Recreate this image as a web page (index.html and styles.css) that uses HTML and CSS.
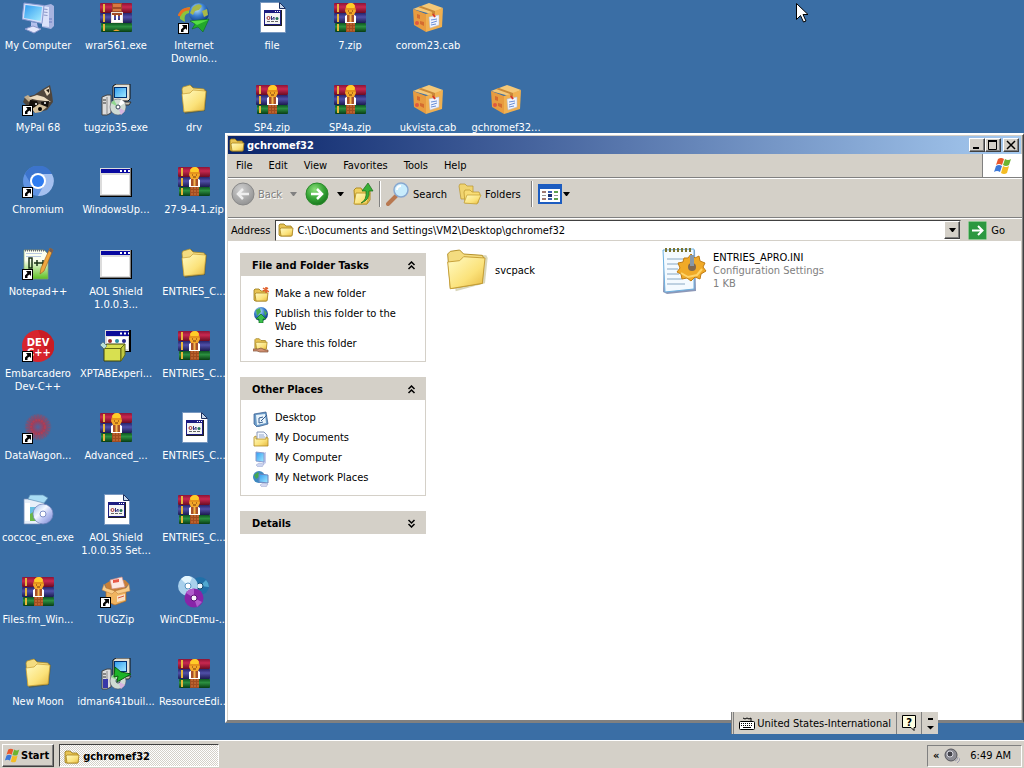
FILE: index.html
```html
<!doctype html>
<html lang="en">
    <head>
        <meta charset="UTF-8" />
        <meta name="viewport" content="width=device-width, initial-scale=1.0" />
        <title>gchromef32</title>
        <link rel="stylesheet" href="styles.css">
    </head>
    <body>
        <!-- Icon sprite -->
        <svg class="sprite" aria-hidden="true">
            <defs>
                <linearGradient id="g-folder" x1="0" y1="0" x2="1" y2="1">
                    <stop offset="0" stop-color="#fffbc4" />
                    <stop offset="0.6" stop-color="#fbe27a" />
                    <stop offset="1" stop-color="#e6b840" />
                </linearGradient>
                <linearGradient id="g-screen" x1="0" y1="0" x2="1" y2="1">
                    <stop offset="0" stop-color="#2f9af0" />
                    <stop offset="1" stop-color="#a4ecff" />
                </linearGradient>
                <linearGradient id="g-red" x1="0" y1="0" x2="0" y2="1">
                    <stop offset="0" stop-color="#8c1436" />
                    <stop offset="0.4" stop-color="#c82850" />
                    <stop offset="1" stop-color="#6c0c22" />
                </linearGradient>
                <linearGradient id="g-blue" x1="0" y1="0" x2="0" y2="1">
                    <stop offset="0" stop-color="#26246c" />
                    <stop offset="0.4" stop-color="#5050a8" />
                    <stop offset="1" stop-color="#1c1a50" />
                </linearGradient>
                <linearGradient id="g-green" x1="0" y1="0" x2="0" y2="1">
                    <stop offset="0" stop-color="#0c5420" />
                    <stop offset="0.4" stop-color="#2c9040" />
                    <stop offset="1" stop-color="#083c14" />
                </linearGradient>
                <radialGradient id="g-globe" cx="0.4" cy="0.3" r="0.7">
                    <stop offset="0" stop-color="#bfe6ff" />
                    <stop offset="0.5" stop-color="#3c80d0" />
                    <stop offset="1" stop-color="#0c3880" />
                </radialGradient>
                <radialGradient id="g-go" cx="0.4" cy="0.3" r="0.7">
                    <stop offset="0" stop-color="#8ee07c" />
                    <stop offset="0.6" stop-color="#35a435" />
                    <stop offset="1" stop-color="#1b7a20" />
                </radialGradient>
                <radialGradient id="g-back" cx="0.4" cy="0.3" r="0.7">
                    <stop offset="0" stop-color="#cfcfcf" />
                    <stop offset="1" stop-color="#949494" />
                </radialGradient>
                <radialGradient id="g-wagon">
                    <stop offset="0" stop-color="#4a66a0" />
                    <stop offset="0.4" stop-color="#9a4060" />
                    <stop offset="1" stop-color="#c03040" stop-opacity="0" />
                </radialGradient>
                <linearGradient id="g-disc" x1="0" y1="0" x2="1" y2="1">
                    <stop offset="0" stop-color="#9ab8f0" />
                    <stop offset="0.4" stop-color="#f4f8ff" />
                    <stop offset="0.6" stop-color="#c0c8f4" />
                    <stop offset="1" stop-color="#7484d0" />
                </linearGradient>
                <linearGradient id="g-npp" x1="0" y1="0" x2="0" y2="1">
                    <stop offset="0.35" stop-color="#fbfff0" />
                    <stop offset="1" stop-color="#5cc020" />
                </linearGradient>
            </defs>

            <symbol id="shortcut" viewBox="0 0 11 11">
                <rect x="0.5" y="0.5" width="10" height="10" fill="#fff" stroke="#000" />
                <path d="M4 2h5v5L7.500 5.500 5.500 7v2H3V6.500L5.500 4z" fill="#000" />
            </symbol>

            <symbol id="computer" viewBox="0 0 32 32">
                <path d="M20 4l9-2 3 2v20l-3 3-9-2z" fill="#a8b4e0" />
                <path d="M20 4l7 1v20l-7-1z" fill="#dce2fa" />
                <path d="M21.500 7l4 .5M21.500 10l4 .5M21.500 13l4 .5" stroke="#8c98c8" />
                <path d="M27 17h3M27 20h3" stroke="#6c7cc0" />
                <path d="M2 1l20 2.500-2 18L0 17z" fill="#d4e0fa" stroke="#8898d0" />
                <path d="M3.500 3l16.500 2-1.500 14L2 16z" fill="url(#g-screen)" />
                <path d="M9 20l6 1 1 5h-7z" fill="#b4c0ec" />
                <path d="M3 27l8-3 8 3-7 4z" fill="#e4e8fc" stroke="#8c98cc" />
            </symbol>

            <!-- Three stacked books, shared by both archive icons -->
            <symbol id="books" viewBox="0 0 32 32">
                <rect x="0" y="1" width="32" height="10" rx="1" fill="url(#g-red)" />
                <rect x="0" y="11" width="32" height="10" rx="1" fill="url(#g-blue)" />
                <rect x="1" y="21" width="31" height="9" rx="1" fill="url(#g-green)" />
                <path d="M4 2v8M4 12v8M4 22v7" stroke="#e8b83c" stroke-width="2" />
            </symbol>

            <symbol id="rar" viewBox="0 0 32 32">
                <use href="#books" width="32" height="32" />
                <path d="M12 20h9v10h-9z" fill="#a04c20" />
                <path d="M14 21v9M17 21v9M20 21v9" stroke="#d4783c" stroke-dasharray="2 1" />
                <path d="M11 14l3-2h5l3 2v7H11z" fill="#fff" />
                <path d="M13 13h7v7h-7z" fill="#a85028" />
                <path d="M16.500 12v8" stroke="#f4b850" stroke-width="2" />
                <path d="M12 5q1-4 4.500-4T21 5l1 4-2 4h-7l-2-4z" fill="#f4a828" />
                <path d="M12 4q2-3 5-3t4 3l-1 2h-7z" fill="#ffcc28" />
                <path d="M11 7h11" stroke="#d88010" />
                <path d="M14 9h1M18 9h1M15 11h3" stroke="#70340c" />
            </symbol>

            <symbol id="rar-exe" viewBox="0 0 32 32">
                <use href="#books" width="32" height="32" />
                <path d="M12 1h10v13H12z" fill="#a04c28" />
                <path d="M13 2h8v3h-8zM13 7h8v2h-8z" fill="#d87840" />
                <path d="M11 13h3v5h2v-5h2v5h2v-5h3v8H11z" fill="#fff" />
                <rect x="11.500" y="10.500" width="11" height="10" fill="none" stroke="#ece4d8" />
                <path d="M13 29q3-3 7 0z" fill="#f0a030" />
            </symbol>

            <symbol id="idm" viewBox="0 0 32 32">
                <path d="M2 17Q1 6 12 5l-1 6q-6 1-4 9z" fill="#8ac43c" />
                <path d="M1 14Q4 6 12 7" fill="none" stroke="#e87020" stroke-width="3" />
                <circle cx="21" cy="11" r="10" fill="url(#g-globe)" />
                <path d="M15 5q6-5 9-1l-3 4-4 1-2 4-3-2zM24 9l5-2 1 6-4 2z" fill="#a8b848" />
                <path d="M12 19l19-2-6 13-5-5-6 2 3-5z" fill="#22a82c" stroke="#0c6414" stroke-width="0.5" />
                <path d="M13 19l17-1-11 5z" fill="#54dc44" />
            </symbol>

            <symbol id="page" viewBox="0 0 32 32">
                <path d="M4.500.5h19l6 6v24h-25z" fill="#fff" stroke="#7898c0" />
                <path d="M23.500.5v6h6z" fill="#c8d8ec" stroke="#1c3060" />
                <rect x="8" y="8" width="18" height="16" fill="#222" />
                <rect x="8" y="8" width="17" height="15" fill="#1c1c80" />
                <rect x="9" y="11" width="15" height="11" fill="#f4f4f4" />
                <path d="M19 9.500h1M21 9.500h1M23 9.500h1" stroke="#fff" />
                <circle cx="12.500" cy="16" r="1.500" fill="none" stroke="#a02c2c" />
                <path d="M15.500 14v4l2.500-3v3" stroke="#303080" fill="none" />
                <circle cx="21" cy="16.500" r="1.500" fill="#207050" />
                <path d="M11 19.500h11" stroke="#666" stroke-dasharray="3 1" />
            </symbol>

            <symbol id="cab" viewBox="0 0 32 32">
                <path d="M1 7L17 1l14 5-12 6z" fill="#f4c878" />
                <path d="M1 7l13 5v18L2 23z" fill="#e89c40" />
                <path d="M14 12l17-6-1 19-16 5z" fill="#f0b050" />
                <path d="M9 4l14 5v3l-3 1V10L6 5z" fill="#c88838" />
                <path d="M17 15l10-2v10l-9 3z" fill="#f0f4fc" stroke="#b0bcd8" stroke-width="0.5" />
                <path d="M19 18l6-1M19 21l6-2M19 23l5-1" stroke="#6c90d8" />
                <path d="M21 12l2 3" stroke="#d83828" stroke-width="2" />
                <path d="M5 12l3 1v4l-3-1zM8 19l4 1v4l-4-2z" fill="#d46c30" />
                <circle cx="5" cy="21" r="2" fill="#e05840" />
            </symbol>

            <symbol id="raccoon" viewBox="0 0 32 32">
                <path d="M21 5l7-4 2 9 1 8-6 8-12 3-7-6-5-5 2-5 9-2z" fill="#50463c" />
                <path d="M22 6l5-3 1 6-3 3z" fill="#e8d8bc" />
                <path d="M24 6l3-1v4z" fill="#241c14" />
                <path d="M2 13l4-2 4 4-3 3z" fill="#c0ac8c" />
                <path d="M6 14l9-3 7 2 7 5-6-1-8-1z" fill="#ecdcc0" />
                <path d="M8 16l7 1 2 4-5 3-5-3zM19 18l8-1-1 6-6 1z" fill="#14100c" />
                <path d="M17 20l3 1 5 2-6 5-6 1-3-4z" fill="#d4c09c" />
                <circle cx="14" cy="20" r="1" fill="#fff" />
                <circle cx="23" cy="19" r="1" fill="#fff" />
                <circle cx="18" cy="25" r="2" fill="#000" />
            </symbol>

            <symbol id="setup" viewBox="0 0 32 32">
                <path d="M2 13l5-2h4v18l-4 2H2z" fill="#dcdcdc" stroke="#444" />
                <path d="M7 13v17" stroke="#888" />
                <path d="M3 16h3M3 19h3" stroke="#333" />
                <path d="M13 2l3-2h14v15l-2 2H13z" fill="#e4e0d4" stroke="#111" />
                <rect x="14.500" y="3.500" width="12" height="10" fill="url(#g-screen)" stroke="#003070" />
                <path d="M14 18h17l-2 3H14z" fill="#c8c4b8" stroke="#333" />
                <circle cx="18" cy="23" r="8" fill="#d0dcd4" stroke="#556" stroke-width="0.5" />
                <path d="M18 23l-7-4 3-3z" fill="#90d890" />
                <path d="M18 23l7 4-4 4z" fill="#d8b4e0" />
                <path d="M18 23l3-8 4 4z" fill="#fff" />
                <circle cx="18" cy="23" r="2" fill="#fff" stroke="#345" />
            </symbol>

            <symbol id="folder" viewBox="0 0 32 32">
                <path d="M5 6l1-3 7-2 3 3 10 1 3 2-2 20L7 30z" fill="#5c5420" fill-opacity="0.5" />
                <path d="M4 5l1-2 7-2 3 3 11 1 1 2-1 19L6 28z" fill="#f4dc80" stroke="#b08c24" stroke-width="0.700" />
                <path d="M4 10l8-1 3-3 13 1-2 19L6 28z" fill="url(#g-folder)" stroke="#c49c34" stroke-width="0.700" />
            </symbol>

            <symbol id="folder-open" viewBox="0 0 16 16">
                <path d="M1 3l1-1h4l2 2h5l1 2v7l-1 1H2l-1-1z" fill="#e8c454" stroke="#987814" stroke-width="0.800" />
                <path d="M2 7l1-1h12l-1 8H3z" fill="url(#g-folder)" stroke="#a88420" stroke-width="0.800" />
            </symbol>

            <symbol id="chromium" viewBox="0 0 32 32">
                <circle cx="16" cy="15" r="15" fill="#6094e4" />
                <path d="M16 8H30A15 15 0 0 0 3 8l6 10A7 7 0 0 1 16 8z" fill="#3c74cc" />
                <path d="M16 8h14a15 15 0 0 1-14 22l6-11A7 7 0 0 0 16 8z" fill="#a4c0f0" />
                <circle cx="16" cy="15" r="8" fill="#fff" />
                <circle cx="16" cy="15" r="6" fill="#2f7cf0" />
            </symbol>

            <symbol id="app" viewBox="0 0 32 32">
                <rect x="0" y="2" width="32" height="29" fill="#000" />
                <rect x="0" y="2" width="31" height="28" fill="#808080" />
                <rect x="0" y="2" width="30" height="27" fill="#dcdcdc" />
                <rect x="1" y="3" width="29" height="4" fill="#0808a0" />
                <path d="M20 5h2M24 5h2M28 5h2" stroke="#fff" stroke-width="2" />
                <rect x="2" y="9" width="27" height="19" fill="#fff" />
            </symbol>

            <symbol id="npp" viewBox="0 0 32 32">
                <path d="M2 2h20l4 4v25H2z" fill="url(#g-npp)" stroke="#88a070" stroke-width="0.700" />
                <path d="M3 2.500h19" stroke="#667" stroke-width="2" stroke-dasharray="1 1" />
                <path d="M4 5.500h16M4 8.500h15" stroke="#b8c8e0" />
                <path d="M7 10h3v10H7zM12 15h6M15 12v6M18 15h6M21 12v6" fill="none" stroke="#183018" stroke-width="1.500" />
                <path d="M28 0l3 2-9 21-4 3 1-6z" fill="#f0a840" stroke="#a05c18" stroke-width="0.600" />
                <path d="M28 0l3 2-1 3-3-2z" fill="#785c50" />
            </symbol>

            <symbol id="package" viewBox="0 0 32 32">
                <rect x="6" y="0" width="25" height="22" fill="#000" />
                <rect x="5" y="0" width="24" height="21" fill="#dcdcdc" />
                <rect x="6" y="1" width="23" height="5" fill="#0c0c98" />
                <path d="M20 3.500h2M24 3.500h2M28 3.500h1" stroke="#fff" stroke-width="2" />
                <rect x="7" y="7" width="21" height="12" fill="#fff" />
                <circle cx="10" cy="11" r="2" fill="#a03030" />
                <circle cx="17" cy="11" r="2" fill="#2c8ca0" />
                <circle cx="24" cy="11" r="2" fill="#28288c" />
                <path d="M2 17l5-3h18l-4 5v12H4V19z" fill="#d8e050" stroke="#3c4008" />
                <path d="M21 18l4-4v11l-4 6zM4 18.500h17" stroke="#606814" fill="#c0c840" />
                <path d="M0 15l3-3 4 4-3 3z" fill="#b8e0d8" stroke="#456" stroke-width="0.500" />
            </symbol>

            <symbol id="wagon" viewBox="0 0 32 32">
                <circle cx="16" cy="15" r="14" fill="url(#g-wagon)" />
                <circle cx="16" cy="15" r="11" fill="none" stroke="#c83c48" stroke-width="3" stroke-dasharray="1 2" stroke-opacity="0.350" />
                <circle cx="16" cy="15" r="7" fill="none" stroke="#d03844" stroke-width="2" stroke-dasharray="2 1" stroke-opacity="0.500" />
            </symbol>

            <symbol id="disc-box" viewBox="0 0 32 32">
                <path d="M2 5h17l3 2v20l-4 3H2z" fill="#e8f0fa" stroke="#7890b8" stroke-width="0.700" />
                <path d="M6 5l2-4h13l5 3-4 5z" fill="#a8dcf4" stroke="#6090b8" stroke-width="0.700" />
                <path d="M3 9h5v18H3z" fill="#fff" />
                <path d="M8 13h9v14H8z" fill="#68c0e0" />
                <path d="M8 20l5-3 3 4v6H8z" fill="#6cb848" />
                <circle cx="21" cy="20" r="10" fill="url(#g-disc)" stroke="#7080b8" stroke-width="0.700" />
                <circle cx="21" cy="20" r="3" fill="#fff" stroke="#8090c8" />
            </symbol>

            <symbol id="tugzip" viewBox="0 0 32 32">
                <path d="M5 8l5-3 15-1 4 4-4 4v13l-11 4-8-4V12z" fill="#c88038" />
                <path d="M10 4l12-3 3 10-13 2z" fill="#fce8e4" stroke="#d08c80" stroke-width="0.700" />
                <path d="M13 4l6-1v3l-6 1z" fill="#e85848" />
                <path d="M6 12l9 3 11-3v13l-11 4-9-4z" fill="#f0b460" stroke="#a8682c" stroke-width="0.700" />
                <path d="M4 8l2 4 9 3-3 3-10-4zM26 12l3-4 1 7-12 3-3-3z" fill="#f8cc88" stroke="#b8783c" stroke-width="0.500" />
                <path d="M17 20l8-2v6l-8 2z" fill="#f8e0c4" />
                <path d="M18 22l6-2" stroke="#d85840" />
            </symbol>

            <symbol id="discs" viewBox="0 0 32 32">
                <circle cx="22" cy="10" r="9" fill="#2070a8" />
                <path d="M22 10l6-6q3 3 3 7z" fill="#50a8d0" />
                <circle cx="22" cy="10" r="3" fill="#e8f4fc" stroke="#104870" />
                <circle cx="10" cy="10" r="10" fill="#a8d0ec" />
                <path d="M10 10L3 3q6-6 11-1zM10 10l8 5q-3 5-9 5z" fill="#e4f6ff" />
                <circle cx="10" cy="10" r="3" fill="#fff" stroke="#5894c0" />
                <circle cx="16" cy="22" r="9.500" fill="#8824a8" />
                <path d="M16 22l-8-5q3-5 8-4zM16 22l8 4-5 5z" fill="#b05ccc" />
                <circle cx="16" cy="22" r="3" fill="#f8f0fc" stroke="#5c1078" />
            </symbol>

            <symbol id="winflag" viewBox="0 0 20 20">
                <path d="M5 3q3-2 6 0L9 9Q6 7 3 9z" fill="#e8582c" />
                <path d="M12 3q3 2 6 0l-2 6q-3 2-6 0z" fill="#6cb430" />
                <path d="M3 10q3-2 6 0l-2 6q-3-2-6 0z" fill="#3c78d8" />
                <path d="M10 10q3 2 6 0l-2 7q-3 2-6 0z" fill="#f4bc24" />
            </symbol>

            <symbol id="circle-arrow" viewBox="0 0 24 24">
                <path d="M6 12h11M12 7l5 5-5 5" fill="none" stroke="#fff" stroke-width="2.500" />
            </symbol>

            <symbol id="chevrons" viewBox="0 0 9 9">
                <path d="M1.500 4l3-3 3 3M1.500 8l3-3 3 3" fill="none" stroke="#000" stroke-width="1.500" />
            </symbol>
        </svg>

        <main class="desktop">
            <ul class="column">
                <li class="shortcut"><svg class="icon"><use href="#computer" /></svg><span>My Computer</span></li>
                <li class="shortcut"><svg class="icon" viewBox="0 0 32 32"><use href="#raccoon" width="32" height="32" /><use href="#shortcut" y="21" width="11" height="11" /></svg><span>MyPal 68</span></li>
                <li class="shortcut"><svg class="icon" viewBox="0 0 32 32"><use href="#chromium" width="32" height="32" /><use href="#shortcut" y="21" width="11" height="11" /></svg><span>Chromium</span></li>
                <li class="shortcut"><svg class="icon" viewBox="0 0 32 32"><use href="#npp" width="32" height="32" /><use href="#shortcut" y="21" width="11" height="11" /></svg><span>Notepad++</span></li>
                <li class="shortcut">
                    <svg class="icon" viewBox="0 0 32 32">
                        <circle cx="16" cy="16" r="16" fill="#d8242c" />
                        <path d="M16 0a16 16 0 0 1 11 28z" fill="#c81c24" />
                        <text x="16" y="16" class="devcpp-text">DEV</text>
                        <text x="17" y="26" class="devcpp-text">C++</text>
                        <use href="#shortcut" y="21" width="11" height="11" />
                    </svg>
                    <span>Embarcadero<br>Dev-C++</span>
                </li>
                <li class="shortcut"><svg class="icon" viewBox="0 0 32 32"><use href="#wagon" width="32" height="32" /><use href="#shortcut" y="21" width="11" height="11" /></svg><span>DataWagon...</span></li>
                <li class="shortcut"><svg class="icon"><use href="#disc-box" /></svg><span>coccoc_en.exe</span></li>
                <li class="shortcut"><svg class="icon"><use href="#rar" /></svg><span>Files.fm_Win...</span></li>
                <li class="shortcut"><svg class="icon"><use href="#folder" /></svg><span>New Moon</span></li>
            </ul>
            <ul class="column">
                <li class="shortcut"><svg class="icon"><use href="#rar-exe" /></svg><span>wrar561.exe</span></li>
                <li class="shortcut"><svg class="icon"><use href="#setup" /></svg><span>tugzip35.exe</span></li>
                <li class="shortcut"><svg class="icon"><use href="#app" /></svg><span>WindowsUp...</span></li>
                <li class="shortcut"><svg class="icon"><use href="#app" /></svg><span>AOL Shield<br>1.0.0.3...</span></li>
                <li class="shortcut"><svg class="icon"><use href="#package" /></svg><span>XPTABExperi...</span></li>
                <li class="shortcut"><svg class="icon"><use href="#rar" /></svg><span>Advanced_...</span></li>
                <li class="shortcut"><svg class="icon"><use href="#page" /></svg><span>AOL Shield<br>1.0.0.35 Set...</span></li>
                <li class="shortcut"><svg class="icon" viewBox="0 0 32 32"><use href="#tugzip" width="32" height="32" /><use href="#shortcut" y="21" width="11" height="11" /></svg><span>TUGZip</span></li>
                <li class="shortcut"><svg class="icon" viewBox="0 0 32 32"><use href="#setup" width="32" height="32" /><path d="M15 9l6 5 10 2-14 8 1-6-4 1z" fill="#1cb428" stroke="#0a5c10" /><path d="M3 21h5v9H3z" fill="#3838a8" /></svg><span>idman641buil...</span></li>
            </ul>
            <ul class="column">
                <li class="shortcut"><svg class="icon" viewBox="0 0 32 32"><use href="#idm" width="32" height="32" /><use href="#shortcut" y="21" width="11" height="11" /></svg><span>Internet<br>Downlo...</span></li>
                <li class="shortcut"><svg class="icon"><use href="#folder" /></svg><span>drv</span></li>
                <li class="shortcut"><svg class="icon"><use href="#rar" /></svg><span>27-9-4-1.zip</span></li>
                <li class="shortcut"><svg class="icon"><use href="#folder" /></svg><span>ENTRIES_C...</span></li>
                <li class="shortcut"><svg class="icon"><use href="#rar" /></svg><span>ENTRIES_C...</span></li>
                <li class="shortcut"><svg class="icon"><use href="#page" /></svg><span>ENTRIES_C...</span></li>
                <li class="shortcut"><svg class="icon"><use href="#rar" /></svg><span>ENTRIES_C...</span></li>
                <li class="shortcut"><svg class="icon"><use href="#discs" /></svg><span>WinCDEmu-...</span></li>
                <li class="shortcut"><svg class="icon"><use href="#rar" /></svg><span>ResourceEdi...</span></li>
            </ul>
            <ul class="column">
                <li class="shortcut"><svg class="icon"><use href="#page" /></svg><span>file</span></li>
                <li class="shortcut"><svg class="icon"><use href="#rar" /></svg><span>SP4.zip</span></li>
            </ul>
            <ul class="column">
                <li class="shortcut"><svg class="icon"><use href="#rar" /></svg><span>7.zip</span></li>
                <li class="shortcut"><svg class="icon"><use href="#rar" /></svg><span>SP4a.zip</span></li>
            </ul>
            <ul class="column">
                <li class="shortcut"><svg class="icon"><use href="#cab" /></svg><span>corom23.cab</span></li>
                <li class="shortcut"><svg class="icon"><use href="#cab" /></svg><span>ukvista.cab</span></li>
            </ul>
            <ul class="column column-second-row">
                <li class="shortcut"><svg class="icon"><use href="#cab" /></svg><span>gchromef32...</span></li>
            </ul>
        </main>

        <!-- Explorer window -->
        <section class="window">
            <header class="titlebar">
                <svg class="icon-small"><use href="#folder-open" /></svg>
                <h1>gchromef32</h1>
                <div class="window-buttons">
                    <button class="raised" aria-label="Minimize"><svg width="12" height="10"><path d="M2 8h6" stroke="#000" stroke-width="2" /></svg></button>
                    <button class="raised" aria-label="Maximize"><svg width="12" height="10"><path d="M1.500 1v8.500h8V1M1 1h9" fill="none" stroke="#000" /><path d="M1 1h9" stroke="#000" stroke-width="2" /></svg></button>
                    <button class="raised close" aria-label="Close"><svg width="12" height="10"><path d="M2 1l8 8M10 1L2 9" stroke="#000" stroke-width="1.500" /></svg></button>
                </div>
            </header>

            <nav class="menubar">
                <button>File</button>
                <button>Edit</button>
                <button>View</button>
                <button>Favorites</button>
                <button>Tools</button>
                <button>Help</button>
                <div class="brand"><svg width="22" height="20"><use href="#winflag" /></svg></div>
            </nav>

            <div class="toolbar">
                <button class="tool back" disabled>
                    <svg width="24" height="24" viewBox="0 0 24 24"><circle cx="12" cy="12" r="11" fill="url(#g-back)" stroke="#888" /><path d="M18 12H7M12 7l-5 5 5 5" fill="none" stroke="#eee" stroke-width="2.500" /></svg>
                    Back
                </button>
                <button class="caret caret-off" aria-label="Back history" disabled></button>
                <button class="tool" aria-label="Forward">
                    <svg width="24" height="24" viewBox="0 0 24 24"><circle cx="12" cy="12" r="11" fill="url(#g-go)" stroke="#2a8a2a" /><use href="#circle-arrow" width="24" height="24" /></svg>
                </button>
                <button class="caret" aria-label="Forward history"></button>
                <button class="tool" aria-label="Up">
                    <svg width="22" height="24" viewBox="0 0 22 24"><path d="M2 8l2-2h5l1 2h8v10l-3 4H3z" fill="#f0d060" stroke="#b08c20" /><path d="M2 22l2-11h14l-3 11z" fill="url(#g-folder)" stroke="#c09c30" /><path d="M9 21q6-3 5-12h-4l6-8 5 8h-4q1 9-8 12z" fill="#38b038" stroke="#186c18" stroke-width="0.700" /></svg>
                </button>
                <span class="separator"></span>
                <button class="tool">
                    <svg width="24" height="24" viewBox="0 0 24 24"><path d="M2 22l8-8" stroke="#b87850" stroke-width="4" stroke-linecap="round" /><circle cx="15" cy="8" r="7" fill="#c8ecfc" stroke="#88a8d0" stroke-width="1.500" /><path d="M11 8q0-4 4-4" fill="none" stroke="#fff" stroke-width="2" /></svg>
                    Search
                </button>
                <button class="tool folders">
                    <svg width="24" height="24" viewBox="0 0 24 24"><path d="M1 4l1-2h5l2 2h6v13H3z" fill="#f0d470" stroke="#b8942c" stroke-width="0.700" /><path d="M6 10l1-2h5l2 2h7l1 2-2 9H7z" fill="#f8dc74" stroke="#b8942c" stroke-width="0.700" /><path d="M6 21l3-8h14l-4 9z" fill="url(#g-folder)" stroke="#c09c30" stroke-width="0.700" /></svg>
                    Folders
                </button>
                <span class="separator"></span>
                <button class="tool views" aria-label="Views">
                    <svg width="24" height="20" viewBox="0 0 24 20"><rect x="1" y="1" width="22" height="18" fill="#fff" stroke="#1c5cc0" stroke-width="2" /><path d="M1 3h22" stroke="#1c5cc0" stroke-width="4" /><path d="M4 8h4M4 15h4" stroke="#a07870" stroke-width="2" /><path d="M10 8h4M10 15h4" stroke="#3c60b0" stroke-width="2" /><path d="M16 8h4M16 15h4" stroke="#5ca04c" stroke-width="2" /><path d="M4 11.500h4M16 11.500h4" stroke="#999" /><path d="M10 11.500h4" stroke="#1c3070" stroke-width="3" /></svg>
                    <i class="arrow"></i>
                </button>
            </div>

            <form class="addressbar">
                <label for="address">Address</label>
                <div class="address-field">
                    <svg class="icon-small"><use href="#folder-open" /></svg>
                    <input type="text" id="address" value="C:\Documents and Settings\VM2\Desktop\gchromef32" />
                    <button type="button" class="raised drop" aria-label="Show addresses"><i class="arrow"></i></button>
                </div>
                <button type="button" class="go">
                    <svg width="19" height="19" viewBox="0 0 19 19"><rect x="0.500" y="0.500" width="18" height="18" rx="1" fill="#2c9840" stroke="#8cc890" /><path d="M4 9.500h10M10 5l4.500 4.500L10 14" fill="none" stroke="#fff" stroke-width="2" /></svg>
                    Go
                </button>
            </form>

            <div class="content">
                <aside class="sidebar">
                    <section class="panel">
                        <h2>File and Folder Tasks <svg width="9" height="9"><use href="#chevrons" /></svg></h2>
                        <ul>
                            <li><svg class="icon-small" viewBox="0 0 16 16"><use href="#folder-open" width="16" height="16" /><path d="M10 4l5-3M13 0v6M10 1l6 4" stroke="#e0602c" stroke-width="1.500" /></svg><a href="#">Make a new folder</a></li>
                            <li><svg class="icon-small" viewBox="0 0 16 16"><circle cx="8" cy="7" r="7" fill="url(#g-globe)" /><path d="M3 3l4-2 1 4-4 4zM11 3l3 3-2 3z" fill="#48b050" /><path d="M8 7l5 5h-3v4H6v-4H3z" fill="#3cc04c" stroke="#107020" stroke-width="0.700" /></svg><a href="#">Publish this folder to the Web</a></li>
                            <li><svg class="icon-small" viewBox="0 0 16 16"><use href="#folder-open" width="16" height="14" /><path d="M0 12h5l3-1 4 2h3v2H7l-3-1H0z" fill="#d09070" stroke="#805038" stroke-width="0.700" /></svg><a href="#">Share this folder</a></li>
                        </ul>
                    </section>
                    <section class="panel">
                        <h2>Other Places <svg width="9" height="9"><use href="#chevrons" /></svg></h2>
                        <ul>
                            <li><svg class="icon-small" viewBox="0 0 16 16"><path d="M1 3l12-2 2 12-11 3-3-3z" fill="#6c9cc8" stroke="#30588c" stroke-width="0.700" /><path d="M3 4l9-1 1 9-9 2z" fill="#e8f4fc" /><path d="M10 6L6 7v5l4-1M8 10l6-6" fill="none" stroke="#345c90" /></svg><a href="#">Desktop</a></li>
                            <li><svg class="icon-small" viewBox="0 0 16 16"><path d="M4 1h7l3 3v9H4z" fill="#f4f8ff" stroke="#8898b8" /><path d="M6 4h5M6 6h6" stroke="#94a8cc" /><path d="M1 6l2-1v3h10V6l2 1v8H1z" fill="url(#g-folder)" stroke="#b08c24" stroke-width="0.800" /></svg><a href="#">My Documents</a></li>
                            <li><svg class="icon-small" viewBox="0 0 16 16"><path d="M9 2l4-1v11l-3 2z" fill="#c4ccec" /><path d="M3 1l8 1v9l-8-1z" fill="url(#g-screen)" stroke="#8898cc" /><path d="M3 14l3-2 5 1-2 3H5z" fill="#ccd4f0" stroke="#98a4cc" stroke-width="0.500" /></svg><a href="#">My Computer</a></li>
                            <li><svg class="icon-small" viewBox="0 0 16 16"><circle cx="6" cy="6" r="6" fill="#3c88c0" /><path d="M1 4l4-3 2 4-4 3z" fill="#44a850" /><path d="M6 3l9 1v8l-9-1z" fill="url(#g-screen)" stroke="#6c84bc" /><path d="M7 14l3-2 5 1-2 3H9z" fill="#d4d8f0" stroke="#98a4cc" stroke-width="0.500" /></svg><a href="#">My Network Places</a></li>
                        </ul>
                    </section>
                    <section class="panel">
                        <h2>Details <svg class="flip" width="9" height="9"><use href="#chevrons" /></svg></h2>
                    </section>
                </aside>

                <ul class="files">
                    <li>
                        <svg width="48" height="48" viewBox="0 0 36 36">
                            <path d="M8 6l26 1 1 2-2 19-22 6z" fill="#a09850" fill-opacity="0.4" />
                            <path d="M5 6l2-2 7-1 3 3 14 1 1 2-1 19L7 32z" fill="#f4dc80" stroke="#b08c24" stroke-width="0.700" />
                            <path d="M5 12l9-1 3-3 16 1-2 19L7 32z" fill="url(#g-folder)" stroke="#c49c34" stroke-width="0.700" />
                        </svg>
                        <p>svcpack</p>
                    </li>
                    <li>
                        <svg width="48" height="48" viewBox="0 0 48 48">
                            <path d="M5 5l31-1 1 41-29 3-4-2z" fill="#8c98b8" />
                            <path d="M4 4l31-1v40L6 46z" fill="#f4faff" stroke="#6cb0e0" />
                            <path d="M6 4h28" stroke="#7c7430" stroke-width="4" stroke-dasharray="2 2" />
                            <path d="M8 13h18M8 18h16M8 23h11M8 28h12M8 33h15M8 38h18" stroke="#88a8c4" />
                            <path d="M29 12l3-4 4 4 4-2 1 5 5 2-2 4 3 4-5 3-1 5-5-2-4 4-4-3-5 1-1-5-4-2 3-4-2-5 5-1 1-4z" fill="#f0aa28" stroke="#c07c14" />
                            <path d="M22 27l7 4 9-2 5-6" fill="none" stroke="#ffd468" stroke-width="2" />
                            <circle cx="33" cy="21" r="4" fill="#806850" />
                            <path d="M31 9h4v11h-4z" fill="#8898a8" />
                        </svg>
                        <p>ENTRIES_APRO.INI<small>Configuration Settings</small><small>1 KB</small></p>
                    </li>
                </ul>
            </div>
        </section>

        <!-- Language bar -->
        <div class="langbar">
            <button><svg width="16" height="14" viewBox="0 0 16 14"><rect x="0.500" y="5.500" width="15" height="8" rx="1" fill="#fff" stroke="#000" /><path d="M2 7.500h12M2 9.500h12" stroke="#000" stroke-dasharray="1 1" /><path d="M4 11.500h8" stroke="#000" /><path d="M4 2l2 1 2-1 2 1 2-1v3" fill="none" stroke="#000" /></svg>United States-International</button>
            <button aria-label="Help"><svg width="14" height="16" viewBox="0 0 14 16"><path d="M.5.5h13v12H12v3l-3-3H.5z" fill="#ffffe1" stroke="#000" /><text x="7" y="11" class="help-mark">?</text></svg></button>
            <button class="options" aria-label="Options"><svg width="8" height="13" viewBox="0 0 8 13"><path d="M2 2h5" stroke="#000" stroke-width="2" /><path d="M1 9h7l-3.500 3.500z" /></svg></button>
        </div>

        <footer class="taskbar">
            <button class="raised start"><svg width="17" height="17"><use href="#winflag" /></svg>Start</button>
            <button class="task"><svg class="icon-small"><use href="#folder-open" /></svg>gchromef32</button>
            <div class="tray">
                <b>«</b>
                <svg width="16" height="16" viewBox="0 0 16 16"><circle cx="7" cy="7" r="6" fill="#8c8c94" stroke="#55555c" /><circle cx="6" cy="6" r="3" fill="#44444c" stroke="#d8d8e0" /><path d="M11 13q3-1 3-4M13 15q3-2 3-5" fill="none" stroke="#9c9cb0" /></svg>
                <time>6:49 AM</time>
            </div>
        </footer>

        <svg class="cursor" width="12" height="20" viewBox="0 0 12 20"><path d="M.5.5v16l4-4 3 6.500 2.500-1-3-6.500h5z" fill="#fff" stroke="#000" /></svg>
    </body>
</html>
```
FILE: styles.css
```css
* {
    box-sizing: border-box;
}

body {
    margin: 0;
    height: 100vh;
    display: flex;
    flex-direction: column;
    overflow: hidden;
    position: relative;
    background: #3a6ea5;
    color: #000;
    font: 11px/13px "DejaVu Sans Condensed", "DejaVu Sans", sans-serif;
}

ul,
p,
h1,
h2 {
    margin: 0;
    padding: 0;
    list-style: none;
    font-size: 11px;
}

button,
input {
    padding: 0;
    border: none;
    background: none;
    color: inherit;
    font: inherit;
}

a {
    color: inherit;
    text-decoration: none;
}

svg {
    flex: none;
}

.sprite {
    position: absolute;
    width: 0;
    height: 0;
}

.icon {
    display: block;
    width: 32px;
    height: 32px;
}

.icon-small {
    width: 16px;
    height: 16px;
}

.devcpp-text,
.help-mark {
    font: bold 11px "DejaVu Sans Condensed", sans-serif;
    text-anchor: middle;
}

.devcpp-text {
    fill: #fff;
}

.raised {
    background: #d4d0c8;
    border: 1px solid;
    border-color: #fff #404040 #404040 #fff;
    box-shadow: inset -1px -1px #808080;
}

.arrow {
    width: 7px;
    border: solid transparent;
    border-width: 4px 3px 0;
    border-top-color: #000;
}

/* Desktop */
.desktop {
    flex: 1;
    display: flex;
    min-height: 0;
    margin-left: -1px;
    padding-top: 2px;
}

.column {
    width: 78px;
}

.column-second-row {
    padding-top: 82px;
}

.shortcut {
    height: 82px;
    display: flex;
    flex-direction: column;
    align-items: center;
    gap: 5px;
    color: #fff;
    text-align: center;
    white-space: nowrap;
}

/* Explorer window */
.window {
    position: absolute;
    top: 133px;
    left: 225px;
    right: 0;
    bottom: 45px;
    display: flex;
    flex-direction: column;
    padding: 1px;
    background: #d4d0c8;
    border: 2px solid;
    border-color: #fff #404040 #808080 #fff;
    border-right-width: 1px;
    box-shadow: inset -1px -1px #808080;
}

.titlebar {
    display: flex;
    align-items: center;
    gap: 2px;
    height: 18px;
    margin-right: 1px;
    padding: 0 2px 0 1px;
    background: linear-gradient(to right, #0a246a, #a6caf0);
    color: #fff;
}

.titlebar h1 {
    flex: 1;
}

.window-buttons {
    display: flex;
}

.window-buttons button {
    width: 16px;
    height: 14px;
    display: flex;
    align-items: center;
    justify-content: center;
}

.window-buttons .close {
    margin-left: 2px;
}

.menubar {
    display: flex;
    height: 24px;
    border-bottom: 1px solid #808080;
}

.menubar button {
    padding: 0 8px;
}

.brand {
    width: 40px;
    margin-left: auto;
    display: flex;
    align-items: center;
    justify-content: center;
    background: #fff;
    border-left: 1px solid #808080;
}

.toolbar {
    display: flex;
    align-items: center;
    height: 40px;
    padding: 0 3px 8px;
    border-top: 1px solid #fff;
    border-bottom: 1px solid #808080;
}

.tool {
    display: flex;
    align-items: center;
    gap: 3px;
}

.back {
    color: #808080;
    text-shadow: 1px 1px #fff;
}

.caret {
    width: 7px;
    margin: 0 8px;
    border: solid transparent;
    border-width: 4px 3px 0;
    border-top-color: #000;
}

.caret-off {
    border-top-color: #808080;
}

.separator {
    width: 2px;
    height: 26px;
    margin: 0 5px;
    border-left: 1px solid #808080;
    border-right: 1px solid #fff;
}

.folders {
    margin: 0 5px 0 11px;
}

.views {
    gap: 1px;
}

.addressbar {
    display: flex;
    align-items: center;
    height: 23px;
    padding: 0 17px 0 3px;
    border-top: 1px solid #fff;
}

.address-field {
    flex: 1;
    display: flex;
    align-items: center;
    height: 21px;
    margin: 0 7px 0 5px;
    padding: 1px 0 1px 2px;
    background: #fff;
    border: 1px solid;
    border-color: #404040 #d4d0c8 #d4d0c8 #404040;
}

.address-field input {
    flex: 1;
    padding: 0 3px;
    outline: none;
}

.drop {
    width: 16px;
    height: 18px;
    display: flex;
    align-items: center;
    justify-content: center;
}

.go {
    display: flex;
    align-items: center;
    gap: 4px;
}

.content {
    flex: 1;
    display: flex;
    gap: 15px;
    margin-right: 1px;
    padding: 12px;
    background: #fff;
}

.sidebar {
    width: 186px;
    display: flex;
    flex-direction: column;
    gap: 15px;
}

.panel h2 {
    display: flex;
    align-items: center;
    justify-content: space-between;
    height: 23px;
    padding: 2px 10px 0 12px;
    background: #d4d0c8;
}

.panel ul {
    display: flex;
    flex-direction: column;
    gap: 4px;
    padding: 11px 20px 8px 12px;
    border: 1px solid #d4d0c8;
    border-top: none;
}

.panel li {
    display: flex;
    gap: 6px;
}

.flip {
    transform: rotate(180deg);
}

.files {
    display: flex;
    align-items: flex-start;
}

.files li {
    width: 218px;
    display: flex;
    align-items: center;
    gap: 6px;
    margin-top: -7px;
}

.files small {
    display: block;
    color: #808080;
    font-size: 11px;
}

/* Language bar */
.langbar {
    position: absolute;
    right: 86px;
    bottom: 34px;
    height: 22px;
    display: flex;
    background: #d4d0c8;
    border-left: 3px double #808080;
}

.langbar button {
    display: flex;
    align-items: center;
    gap: 2px;
    padding: 0 5px;
    border-right: 1px solid #808080;
}

.langbar .options {
    padding: 0 4px;
    border: none;
}

/* Taskbar */
.taskbar {
    display: flex;
    align-items: center;
    gap: 5px;
    height: 28px;
    padding: 2px 2px 0;
    background: #d4d0c8;
    border-top: 1px solid #fff;
    font-weight: bold;
}

.start {
    display: flex;
    align-items: center;
    height: 23px;
    padding: 0 4px 0 1px;
}

.task {
    width: 160px;
    height: 23px;
    display: flex;
    align-items: center;
    gap: 3px;
    padding: 2px 4px 0;
    background: conic-gradient(#d4d0c8 25%, #fff 0 50%, #d4d0c8 0 75%, #fff 0) 0 0 / 2px 2px;
    border: 1px solid;
    border-color: #404040 #fff #fff #404040;
}

.tray {
    height: 22px;
    display: flex;
    align-items: center;
    margin-left: auto;
    padding: 0 10px 0 5px;
    border: 1px solid;
    border-color: #808080 #fff #fff #808080;
    font-weight: normal;
}

.tray svg {
    margin: 0 10px 0 5px;
}

.cursor {
    position: absolute;
    top: 3px;
    left: 796px;
}
```
